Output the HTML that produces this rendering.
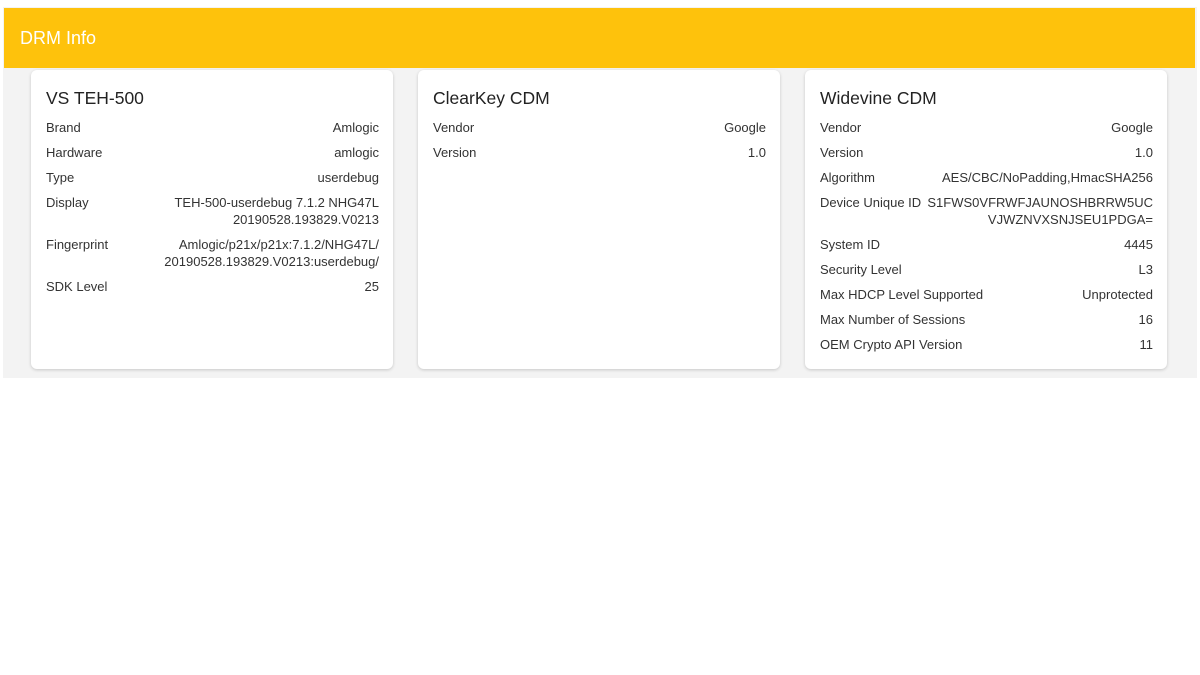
<!DOCTYPE html>
<html><head><meta charset="utf-8"><style>
*{margin:0;padding:0;box-sizing:border-box}
body{width:1200px;height:675px;background:#fff;font-family:"Liberation Sans",sans-serif;position:relative;overflow:hidden}
.bg{position:absolute;left:3px;top:7px;width:1194px;height:371px;background:#f3f3f3}
.hdr{position:absolute;left:4px;top:8px;width:1191px;height:60px;background:#fec20c;color:#fff;font-size:18px;padding:20px 0 0 16px}
.card{position:absolute;top:70px;width:362px;height:299px;background:#fff;border-radius:6px;box-shadow:0 1px 3px rgba(0,0,0,.18);padding:18px 14px 0 15px;color:#333}
.card h2{font-weight:normal;font-size:17.5px;color:#222;height:29px;margin-bottom:2px}
.r{display:flex;justify-content:space-between;font-size:13px;line-height:17px;margin-bottom:8px}
.r span:last-child{text-align:right}
</style></head><body>
<div class="bg"></div>
<div class="hdr">DRM Info</div>
<div class="card" style="left:31px">
<h2>VS TEH-500</h2>
<div class="r"><span>Brand</span><span>Amlogic</span></div>
<div class="r"><span>Hardware</span><span>amlogic</span></div>
<div class="r"><span>Type</span><span>userdebug</span></div>
<div class="r"><span>Display</span><span>TEH-500-userdebug 7.1.2 NHG47L<br>20190528.193829.V0213</span></div>
<div class="r"><span>Fingerprint</span><span>Amlogic/p21x/p21x:7.1.2/NHG47L/<br>20190528.193829.V0213:userdebug/</span></div>
<div class="r"><span>SDK Level</span><span>25</span></div>
</div>
<div class="card" style="left:418px">
<h2>ClearKey CDM</h2>
<div class="r"><span>Vendor</span><span>Google</span></div>
<div class="r"><span>Version</span><span>1.0</span></div>
</div>
<div class="card" style="left:805px">
<h2>Widevine CDM</h2>
<div class="r"><span>Vendor</span><span>Google</span></div>
<div class="r"><span>Version</span><span>1.0</span></div>
<div class="r"><span>Algorithm</span><span>AES/CBC/NoPadding,HmacSHA256</span></div>
<div class="r"><span>Device Unique ID</span><span>S1FWS0VFRWFJAUNOSHBRRW5UC<br>VJWZNVXSNJSEU1PDGA=</span></div>
<div class="r"><span>System ID</span><span>4445</span></div>
<div class="r"><span>Security Level</span><span>L3</span></div>
<div class="r"><span>Max HDCP Level Supported</span><span>Unprotected</span></div>
<div class="r"><span>Max Number of Sessions</span><span>16</span></div>
<div class="r"><span>OEM Crypto API Version</span><span>11</span></div>
</div>
</body></html>
